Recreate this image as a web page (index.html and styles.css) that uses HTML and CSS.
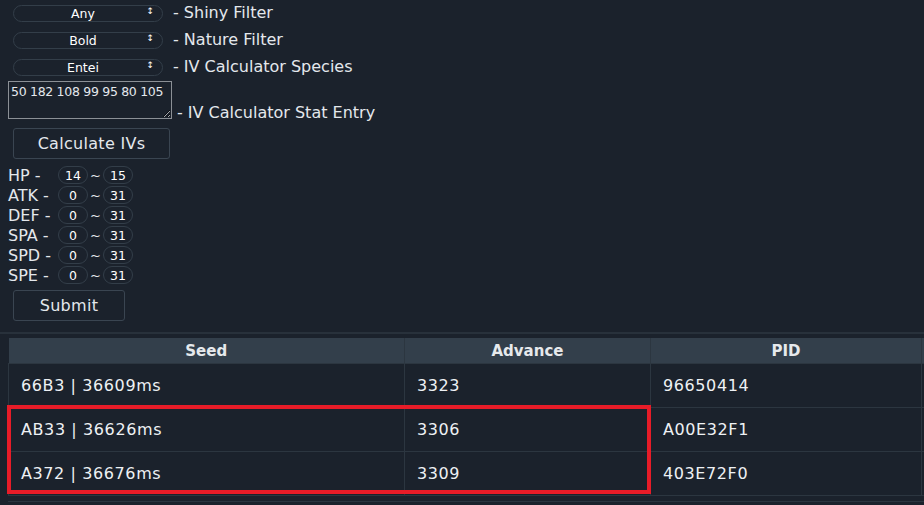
FILE: index.html
```html
<!DOCTYPE html>
<html lang="en">
<head>
  <meta charset="UTF-8" />
  <meta name="viewport" content="width=device-width, initial-scale=1.0"/>
  <title>RNG Tool</title>
  <link rel="stylesheet" href="styles.css">
</head>
<body>

  <!-- Filters -->
  <div class="panel">
    <div class="filter-row">
      <div class="select-wrap">
        <select><option>Any</option></select>
        <span class="arrow">&#8597;</span>
      </div>
      <span>- Shiny Filter</span>
    </div>
    <div class="filter-row">
      <div class="select-wrap">
        <select><option>Bold</option></select>
        <span class="arrow">&#8597;</span>
      </div>
      <span>- Nature Filter</span>
    </div>
    <div class="filter-row">
      <div class="select-wrap">
        <select><option>Entei</option></select>
        <span class="arrow">&#8597;</span>
      </div>
      <span>- IV Calculator Species</span>
    </div>

    <div class="entry-row">
      <textarea>50 182 108 99 95 80 105</textarea>
      <span>- IV Calculator Stat Entry</span>
    </div>

    <button class="button calc-btn">Calculate IVs</button>

    <!-- IV ranges -->
    <div class="iv-list">
      <div class="iv-row"><span class="iv-label">HP -</span><input class="iv" value="14"><span class="tilde">~</span><input class="iv" value="15"></div>
      <div class="iv-row"><span class="iv-label">ATK -</span><input class="iv" value="0"><span class="tilde">~</span><input class="iv" value="31"></div>
      <div class="iv-row"><span class="iv-label">DEF -</span><input class="iv" value="0"><span class="tilde">~</span><input class="iv" value="31"></div>
      <div class="iv-row"><span class="iv-label">SPA -</span><input class="iv" value="0"><span class="tilde">~</span><input class="iv" value="31"></div>
      <div class="iv-row"><span class="iv-label">SPD -</span><input class="iv" value="0"><span class="tilde">~</span><input class="iv" value="31"></div>
      <div class="iv-row"><span class="iv-label">SPE -</span><input class="iv" value="0"><span class="tilde">~</span><input class="iv" value="31"></div>
    </div>

    <button class="button submit-btn">Submit</button>
  </div>

  <!-- Results -->
  <div class="results">
    <div class="table-wrap">
      <table>
        <thead>
          <tr><th class="col-seed">Seed</th><th class="col-adv">Advance</th><th class="col-pid">PID</th><th class="col-more"></th></tr>
        </thead>
        <tbody>
          <tr><td>66B3 | 36609ms</td><td>3323</td><td>96650414</td><td></td></tr>
          <tr><td>AB33 | 36626ms</td><td>3306</td><td>A00E32F1</td><td></td></tr>
          <tr><td>A372 | 36676ms</td><td>3309</td><td>403E72F0</td><td></td></tr>
        </tbody>
      </table>
      <div class="highlight"></div>
    </div>
  </div>

</body>
</html>
```

FILE: styles.css
```css
:root {
  --bg: #1b222c;
  --text: #e4e8ec;
  --line: #2c3640;
  --pill-border: #333e49;
  --head-bg: #333f4b;
  --mark: #e81c28;
}

* {
  box-sizing: border-box;
  margin: 0;
  padding: 0;
}

body {
  font-family: "DejaVu Sans", sans-serif;
  background-color: var(--bg);
  color: var(--text);
  font-size: 16px;
  overflow: hidden;
}

.panel {
  padding: 4px 8px 0;
}

.filter-row {
  display: flex;
  align-items: center;
  gap: 10px;
  height: 17px;
  margin-bottom: 10px;
}

.filter-row:nth-child(3) {
  margin-bottom: 6px;
}

.select-wrap {
  position: relative;
  margin-left: 5px;
}

select {
  appearance: none;
  -webkit-appearance: none;
  width: 150px;
  height: 17px;
  border: 1px solid var(--pill-border);
  border-radius: 9px;
  background: transparent;
  color: #ffffff;
  font-family: inherit;
  font-size: 12.5px;
  text-align: center;
  text-align-last: center;
  padding: 0 10px 0 0;
}

.arrow {
  position: absolute;
  right: 9px;
  top: 2px;
  font-size: 9px;
  line-height: 13px;
  color: #ffffff;
}

.entry-row {
  display: flex;
  align-items: flex-end;
  gap: 5px;
}

textarea {
  width: 164px;
  height: 38px;
  border: 1px solid #8b9096;
  background: var(--bg);
  color: var(--text);
  font-family: inherit;
  font-size: 12.5px;
  padding: 2px 2px;
  resize: vertical;
  letter-spacing: -0.3px;
}

.entry-row span {
  line-height: 12px;
}

.button {
  display: block;
  margin-left: 5px;
  height: 31px;
  border: 1px solid #3a4551;
  border-radius: 3px;
  background: transparent;
  color: var(--text);
  font-family: inherit;
  font-size: 16px;
  letter-spacing: 0.3px;
  cursor: pointer;
}

.calc-btn {
  width: 157px;
  margin-top: 9px;
}

.iv-list {
  margin-top: 6px;
}

.iv-row {
  display: flex;
  align-items: center;
  height: 20px;
}

.iv-label {
  width: 50px;
}

.iv {
  width: 30px;
  height: 18px;
  border: 1px solid var(--pill-border);
  border-radius: 9px;
  background: transparent;
  color: #ffffff;
  font-family: inherit;
  font-size: 12.5px;
  text-align: center;
}

.tilde {
  width: 15px;
  text-align: center;
  font-size: 13px;
}

.submit-btn {
  width: 112px;
  margin-top: 5px;
}

.results {
  margin-top: 11px;
  border-top: 2px solid #28313b;
  padding: 4px 0 0 8px;
}

.table-wrap {
  position: relative;
  border-bottom: 1px solid var(--line);
  padding-bottom: 5px;
}

table {
  border-collapse: collapse;
  table-layout: fixed;
  width: 940px;
}

th {
  background-color: var(--head-bg);
  height: 25px;
  padding-top: 2px;
  font-weight: bold;
  font-size: 15px;
  color: #e6e9ec;
  border-right: 1px solid var(--line);
}

td {
  height: 44px;
  padding: 0 12px;
  border: 1px solid var(--line);
  font-size: 16px;
  letter-spacing: 0.6px;
  color: #eef1f4;
}

.col-seed { width: 396px; }
.col-adv { width: 246px; }
.col-pid { width: 271px; }

.highlight {
  position: absolute;
  left: -1px;
  top: 67px;
  width: 644px;
  height: 89px;
  border: 4px solid var(--mark);
  pointer-events: none;
}
```
